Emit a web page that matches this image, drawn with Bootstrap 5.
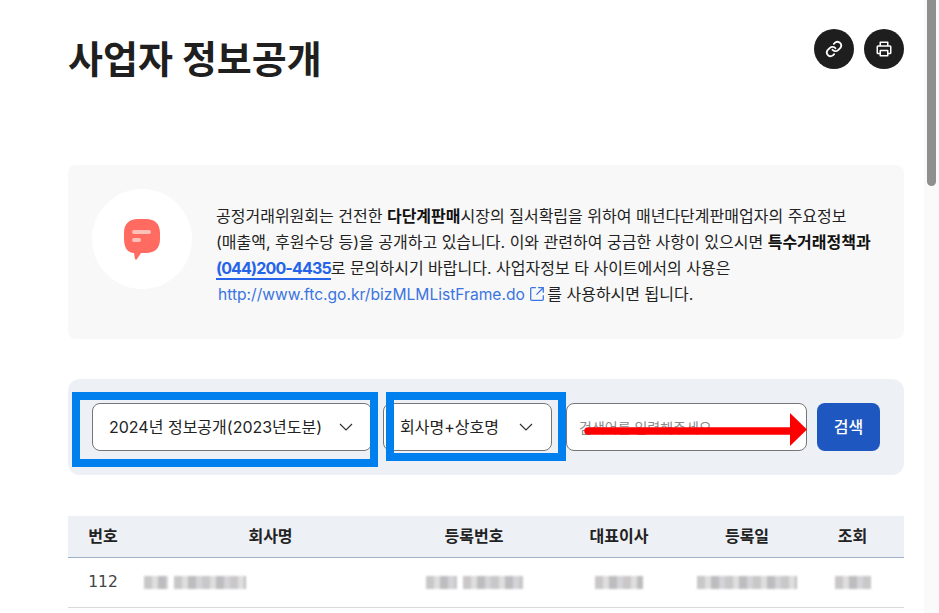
<!DOCTYPE html>
<html lang="ko"><head><meta charset="utf-8">
<link href="https://cdn.jsdelivr.net/npm/bootstrap@5.3.0/dist/css/bootstrap.min.css" rel="stylesheet">
<style>
html,body{height:613px;overflow:hidden;background:#fff}
body{font-family:Inter,"Noto Sans CJK KR",sans-serif;color:#222;position:relative}
.pagewrap{width:924px;padding:0 20px 0 68px}
.sbar{position:absolute;top:0;right:0;width:15px;height:613px;background:#fafafa}
.sthumb{position:absolute;left:3px;top:0;width:9px;height:186px;background:#8f8f8f;border-radius:0 0 5px 5px}
.headrow{height:165px;padding-top:28px}
.pagetitle{font-size:38px;font-weight:700;line-height:62px;margin:0;color:#1f1f1f}
.roundbtn{width:40px;height:40px;border-radius:50%;background:#1e1e1e;border:0;padding:0}
.infobox{height:174px;background:#f8f8f8;border-radius:8px;padding:24px}
.circle{width:100px;height:100px;background:#fff;border-radius:50%;flex:none}
.infotext{margin:0 0 0 24px;font-size:16px;line-height:26px;color:#222;padding-top:14px;white-space:nowrap}
.infotext b{font-weight:700;color:#111}
.phone{color:#2563eb;font-weight:700;border-bottom:2px solid #2563eb;text-decoration:none;letter-spacing:-.85px}
.extlink{color:#3b74e0;text-decoration:none;margin-left:2px;margin-right:2px;font-size:15.6px}
.extico{vertical-align:-2px}
.searchbar{margin-top:40px;height:96px;background:#edf0f5;border-radius:12px;padding:24px;position:relative}
.fieldsel,.fieldinp{height:48px;border:1px solid #767676;border-radius:8px;background:#fff;font-size:16px;color:#222;display:flex;align-items:center;justify-content:space-between}
.sel1{width:280px;padding:0 18px 0 16px;margin-right:11px}
.sel2{width:169px;padding:0 18px 0 16px;margin-right:14px}
.fieldinp{width:241px;padding:0 12px;font-size:14px;color:#8a8a8a;margin-right:10px}
.btnsearch{width:63px;height:48px;background:#1d57bf;color:#fff;border:0;border-radius:8px;font-size:16px;font-weight:500;padding:0}
.hilite{position:absolute;border:8px solid #007fef}
.hl1{left:4px;top:13px;width:306px;height:75px}
.hl2{left:318px;top:13px;width:180px;height:69px}
.redarrow{position:absolute;left:512px;top:30px}
.datatable{margin-top:41px;margin-bottom:0;table-layout:fixed;width:836px;--bs-table-bg:transparent}
.datatable th{background:#edf0f5;height:41px;font-size:16px;font-weight:700;color:#222;text-align:center;vertical-align:middle;padding:0;border-bottom:1px solid #a0b0c8}
.datatable td{height:50px;font-size:15.5px;font-family:"DejaVu Sans",sans-serif;color:#444;text-align:center;vertical-align:middle;padding:2px 0 0;border-bottom:1px solid #d9d9d9}
.datatable td.leftcell{text-align:left;padding-left:6px}
.blurred{display:inline-block;height:13px;background:repeating-linear-gradient(90deg,#c9c7c8 0 8px,#dfdedf 8px 14px,#bdbcbe 14px 22px,#d4d4d8 22px 28px);filter:blur(1.200px);vertical-align:middle}
.gapr{margin-right:6px}
.w24{width:24px}.w72{width:72px}.w31{width:31px}.w60{width:60px}.w48{width:48px}.w100{width:100px}.w36{width:36px}
</style></head><body>
<div class="pagewrap">
<div class="headrow d-flex justify-content-between align-items-start">
<h1 class="pagetitle">사업자 정보공개</h1>
<div class="d-flex align-items-center" style="margin-top:1px;gap:10px">
<button class="roundbtn d-flex align-items-center justify-content-center" aria-label="링크"><svg width="18" height="18" viewBox="0 0 24 24" fill="none" stroke="#fff" stroke-width="2.400" stroke-linecap="round" stroke-linejoin="round"><path d="M10 13a5 5 0 0 0 7.500.5l3-3a5 5 0 0 0-7-7l-1.700 1.700"/><path d="M14 11a5 5 0 0 0-7.500-.5l-3 3a5 5 0 0 0 7 7l1.700-1.700"/></svg></button>
<button class="roundbtn d-flex align-items-center justify-content-center" aria-label="인쇄"><svg width="18" height="18" viewBox="0 0 24 24" fill="none" stroke="#fff" stroke-width="2" stroke-linejoin="round"><path d="M7 8V3h10v5"/><path d="M7 18H4a1 1 0 0 1-1-1V9a1 1 0 0 1 1-1h16a1 1 0 0 1 1 1v8a1 1 0 0 1-1 1h-3"/><path d="M7 14h10v7H7z"/></svg></button>
</div></div>
<div class="infobox d-flex align-items-start">
<div class="circle d-flex align-items-center justify-content-center">
<svg width="36" height="41" viewBox="0 0 36 41"><path d="M14 0h8c9 0 14 5 14 14v6c0 9-5 14-14 14h-5l-4 6c-.5 1-1.500 1-2 0l-1-6C4 34 0 29 0 20v-6C0 5 5 0 14 0z" fill="#ff6b60"/><rect x="8" y="11" width="19" height="4" rx="2" fill="#ffc0ba"/><rect x="8" y="19" width="9" height="4" rx="2" fill="#ffc0ba"/></svg>
</div>
<p class="infotext">공정거래위원회는 건전한 <b>다단계판매</b>시장의 질서확립을 위하여 매년다단계판매업자의 주요정보<br>(매출액, 후원수당 등)을 공개하고 있습니다. 이와 관련하여 궁금한 사항이 있으시면 <b>특수거래정책과</b><br><a class="phone" href="#">(044)200-4435</a>로 문의하시기 바랍니다. 사업자정보 타 사이트에서의 사용은<br><a class="extlink" href="#">http://www.ftc.go.kr/bizMLMListFrame.do <svg class="extico" width="16" height="16" viewBox="0 0 14 14" fill="none" stroke="#3b74e0" stroke-width="1.100"><path d="M6 1.500H2.500a1 1 0 0 0-1 1v9a1 1 0 0 0 1 1h9a1 1 0 0 0 1-1V8"/><path d="M8 1.500h4.500V6M12.500 1.500L6.500 7.500"/></svg></a>를 사용하시면 됩니다.</p>
</div>
<div class="searchbar d-flex align-items-center">
<div class="fieldsel sel1"><span>2024년 정보공개(2023년도분)</span><svg width="14" height="8" viewBox="0 0 14 8" fill="none" stroke="#333" stroke-width="1.200"><path d="M1 1l6 6 6-6"/></svg></div>
<div class="fieldsel sel2"><span>회사명+상호명</span><svg width="14" height="8" viewBox="0 0 14 8" fill="none" stroke="#333" stroke-width="1.200"><path d="M1 1l6 6 6-6"/></svg></div>
<div class="fieldinp">검색어를 입력해주세요</div>
<button class="btnsearch">검색</button>
<div class="hilite hl1"></div><div class="hilite hl2"></div>
<svg class="redarrow" width="228" height="40" viewBox="0 0 228 40"><path d="M8 22H212" stroke="#f00" stroke-width="7.500" stroke-linecap="round"/><path d="M210 4l17 16.500-17 16.500z" fill="#f00"/></svg>
</div>
<table class="table datatable"><colgroup><col style="width:70px"><col style="width:265px"><col style="width:142px"><col style="width:148px"><col style="width:108px"><col style="width:103px"></colgroup>
<thead><tr><th>번호</th><th>회사명</th><th>등록번호</th><th>대표이사</th><th>등록일</th><th>조회</th></tr></thead>
<tbody><tr><td>112</td><td class="leftcell"><span class="blurred w24 gapr"></span><span class="blurred w72"></span></td><td><span class="blurred w31 gapr"></span><span class="blurred w60"></span></td><td><span class="blurred w48"></span></td><td><span class="blurred w100"></span></td><td><span class="blurred w36"></span></td></tr></tbody></table>
</div>
<div class="sbar"><div class="sthumb"></div></div>
</body></html>
